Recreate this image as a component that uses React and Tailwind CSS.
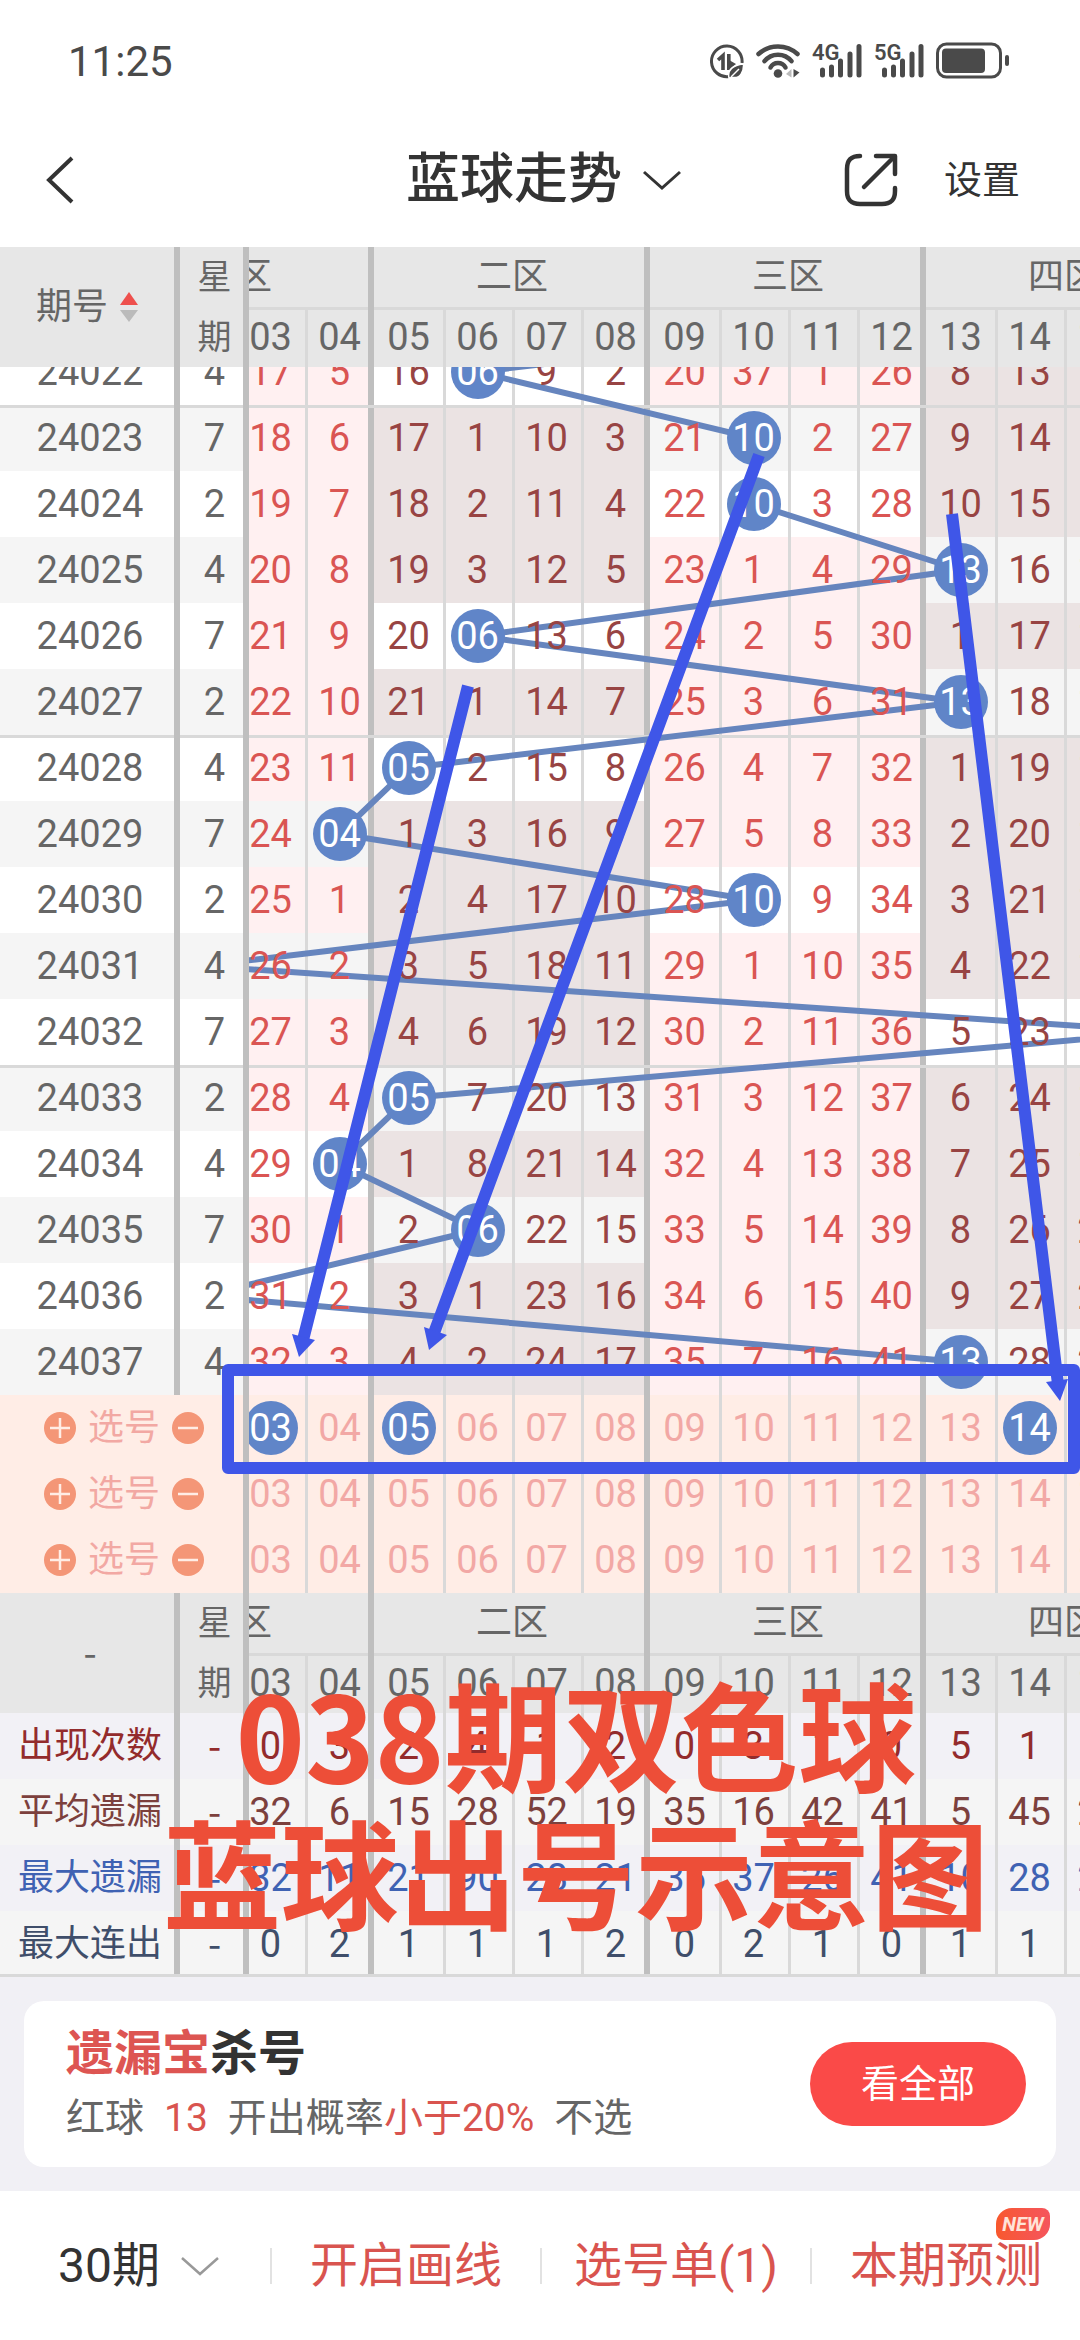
import React, { useState } from 'react'
import { clsx } from 'clsx'

const CELL_W = 69
const ROW_H = 66

const zones = ['一区', '二区', '三区', '四区']
const balls = Array.from({ length: 16 }, (_, i) => i + 1)
const weekdays = [4, 7, 2]

// winning blue ball of every draw, 24022 first
const hits = [6, 10, 10, 13, 6, 13, 5, 4, 10, 2, 16, 5, 4, 6, 2, 13]
// misses of every ball just before the first draw
const startMiss = [8, 3, 16, 4, 15, 2, 8, 1, 19, 36, 0, 25, 7, 12, 6, 5]

const draws = []
let current = startMiss
hits.forEach((hit, i) => {
  current = current.map((m, c) => (c + 1 === hit ? 0 : m + 1))
  draws.push({ issue: 24022 + i, day: weekdays[i % 3], hit, miss: current })
})

const stats = [
  { label: '出现次数', color: 'text-[#932b2c]', bg: 'bg-[#f2f1f6]', values: [1, 3, 0, 3, 2, 4, 1, 2, 0, 3, 1, 0, 5, 1, 1, 2] },
  { label: '平均遗漏', color: 'text-[#7c403d]', bg: 'bg-[#f5f5f5]', values: [28, 9, 32, 6, 15, 28, 52, 19, 35, 16, 42, 41, 5, 45, 20, 12] },
  { label: '最大遗漏', color: 'text-[#3f62b3]', bg: 'bg-[#f2f1f6]', values: [30, 14, 32, 11, 21, 90, 28, 21, 35, 37, 26, 41, 10, 28, 22, 15] },
  { label: '最大连出', color: 'text-[#3f4e6a]', bg: 'bg-[#f5f5f5]', values: [1, 1, 0, 2, 1, 1, 1, 2, 0, 2, 1, 0, 1, 1, 1, 1] },
]

// grid lines by position inside a zone
const lines = {
  body: [
    '',
    'shadow-[inset_3px_0_0_#d9d9d9]',
    'shadow-[inset_3px_0_0_#d9d9d9]',
    'shadow-[inset_3px_0_0_#d9d9d9,inset_-6px_0_0_#bfbfbf]',
  ],
  first: [
    'shadow-[inset_0_3px_0_#d9d9d9]',
    'shadow-[inset_0_3px_0_#d9d9d9,inset_3px_0_0_#d9d9d9]',
    'shadow-[inset_0_3px_0_#d9d9d9,inset_3px_0_0_#d9d9d9]',
    'shadow-[inset_0_3px_0_#d9d9d9,inset_3px_0_0_#d9d9d9,inset_-6px_0_0_#bfbfbf]',
  ],
  head: [
    'shadow-[inset_0_3px_0_#d9d9d9]',
    'shadow-[inset_0_3px_0_#d9d9d9,inset_3px_0_0_#d9d9d9]',
    'shadow-[inset_0_3px_0_#d9d9d9,inset_3px_0_0_#d9d9d9]',
    'shadow-[inset_-6px_0_0_#bfbfbf,inset_0_3px_0_#d9d9d9,inset_3px_0_0_#d9d9d9]',
  ],
  last: [
    'shadow-[inset_0_-3px_0_#d9d9d9]',
    'shadow-[inset_0_-3px_0_#d9d9d9,inset_3px_0_0_#d9d9d9]',
    'shadow-[inset_0_-3px_0_#d9d9d9,inset_3px_0_0_#d9d9d9]',
    'shadow-[inset_0_-3px_0_#d9d9d9,inset_3px_0_0_#d9d9d9,inset_-6px_0_0_#bfbfbf]',
  ],
}

const sideLine = 'shadow-[inset_-6px_0_0_#bfbfbf]'
const sideFirst = 'shadow-[inset_-6px_0_0_#bfbfbf,inset_0_3px_0_#d9d9d9]'
const sideLast = 'shadow-[inset_0_-3px_0_#d9d9d9,inset_-6px_0_0_#bfbfbf]'

const pad = (n) => String(n).padStart(2, '0')
const isFirst = (issue) => issue % 5 === 3

function StatusBar() {
  return (
    <div className="flex h-28 items-center justify-between pt-3 pr-[70px] pl-[68px] text-[#4a4a4a]">
      <span className="text-[42px] leading-none">11:25</span>
      <div className="flex items-center gap-3">
        <svg className="h-9 w-9" viewBox="0 0 36 36" fill="none" stroke="currentColor" strokeWidth="3">
          <path d="M21 32.500 A15.300 15.300 0 1 1 34 19" />
          <path d="M10 16 L15 11.500 V26" strokeWidth="3.600" />
          <path d="M20.800 10 V26" strokeWidth="3.600" />
          <path d="M21 26 V16 L28 20Z" fill="currentColor" stroke="none" />
          <path d="M21 34 C19 26 25 21 35.500 20 C36 28 32 34.500 25 33.500Z" fill="currentColor" stroke="#fff" strokeWidth="1.500" />
          <path d="M23 33 L31 25" stroke="#fff" strokeWidth="1.500" />
        </svg>
        <svg className="h-9 w-11" viewBox="0 0 44 36" fill="none" stroke="currentColor" strokeWidth="4.500" strokeLinecap="round">
          <path d="M2.500 10 A29 29 0 0 1 41.500 10" />
          <path d="M8.500 17.200 A17.300 17.300 0 0 1 35.500 17.200" />
          <path d="M14.500 23.500 A8.500 8.500 0 0 1 29.500 23.500" />
          <circle cx="22" cy="29.500" r="4.300" fill="currentColor" stroke="none" />
          <path d="M35.500 25 V33.500 L30 30Z" fill="#bbb" stroke="none" />
          <path d="M37.500 25 V33.500 L43.500 28.500Z" fill="currentColor" stroke="none" />
        </svg>
        <Signal label="4G" />
        <Signal label="5G" />
        <svg className="h-10 w-[74px]" viewBox="0 0 74 40" fill="none" stroke="currentColor" strokeWidth="3">
          <rect x="1.500" y="2" width="63" height="33" rx="9" />
          <rect x="6" y="6.500" width="43" height="24.500" rx="4" fill="currentColor" stroke="none" />
          <rect x="69" y="13" width="4" height="11" rx="2" fill="currentColor" stroke="none" />
        </svg>
      </div>
    </div>
  )
}

function Signal({ label }) {
  return (
    <div className="relative h-9 w-[50px]">
      <span className="absolute top-0 left-0 text-[22px] leading-[18px] font-semibold">{label}</span>
      <svg className="h-9 w-[50px]" viewBox="0 0 50 36" stroke="currentColor" strokeWidth="5" strokeLinecap="round">
        <path d="M10.500 26 V31 M19.500 23 V31 M28.500 17 V31 M38 10 V31 M47 2.500 V31" />
      </svg>
    </div>
  )
}

function TopBar() {
  return (
    <header className="grid h-[135px] grid-cols-[1fr_auto_1fr] items-center pr-[60px] pl-11 text-[#333]">
      <button aria-label="返回" className="justify-self-start">
        <svg className="h-[50px] w-8" viewBox="0 0 32 50" fill="none" stroke="currentColor" strokeWidth="4">
          <path d="M28 3 L5 25 L28 47" />
        </svg>
      </button>
      <div className="flex items-center gap-5 pl-6">
        <select aria-label="走势" className="appearance-none bg-transparent text-[54px] leading-[72px] font-medium">
          <option>蓝球走势</option>
        </select>
        <svg className="h-5 w-10" viewBox="0 0 40 20" fill="none" stroke="currentColor" strokeWidth="3">
          <path d="M2 2 L20 18 L38 2" />
        </svg>
      </div>
      <div className="flex items-center gap-[46px] justify-self-end">
        <button aria-label="分享">
          <svg className="h-[54px] w-[54px]" viewBox="0 0 54 54" fill="none" stroke="currentColor" strokeWidth="4.500" strokeLinecap="round">
            <path d="M16 3 C7 3 3 7 3 16 V38 C3 47 7 51 16 51 H38 C47 51 51 47 51 38 V35" />
            <path d="M20 34 L50 4" />
            <path d="M32 3 H51 V21" strokeLinejoin="round" />
          </svg>
        </button>
        <button className="text-[38px] leading-none">设置</button>
      </div>
    </header>
  )
}

function SideHead({ children }) {
  return (
    <tr className="h-[120px] bg-[#e7e7e7]">
      <th className={clsx('w-[180px] p-0 font-normal', sideLine)}>{children}</th>
      <th className={clsx('w-[69px] p-0 text-center font-normal', sideLine)}>
        <span className="block text-[34px] leading-[60px]">星<br />期</span>
      </th>
    </tr>
  )
}

function GridHead() {
  return (
    <>
      <tr className="h-[60px] bg-[#e7e7e7] text-[36px]">
        {zones.map(z => (
          <th key={z} colSpan={4} className={clsx('p-0 leading-none font-normal', sideLine)}>{z}</th>
        ))}
      </tr>
      <tr className="h-[60px] bg-[#e7e7e7] text-[38px]">
        {balls.map((b, i) => (
          <th key={b} className={clsx('w-[69px] p-0 leading-none font-normal', lines.head[i % 4])}>{pad(b)}</th>
        ))}
      </tr>
    </>
  )
}

function RoundIcon({ plus }) {
  return (
    <svg className="block h-8 w-8" viewBox="0 0 32 32" stroke="#ffede6" strokeWidth="2.500">
      <circle cx="16" cy="16" r="16" fill="#f49677" stroke="none" />
      <path d={plus ? 'M6 16 H26 M16 6 V26' : 'M6 16 H26'} />
    </svg>
  )
}

function Dash() {
  return <span className="font-['Noto_Sans_CJK_SC',sans-serif] text-[38px] leading-none">-</span>
}

function SideTables({ picks, onAdd, onClear }) {
  return (
    <div className="w-[249px] shrink-0">
      <table className="w-full table-fixed border-separate border-spacing-0">
        <thead>
          <SideHead>
            <button className="flex w-full items-center gap-3 pl-9 text-[36px] leading-none">
              期号
              <svg className="h-8 w-[18px]" viewBox="0 0 18 32">
                <path d="M9 1 L18 14 H0Z" fill="#ee504d" />
                <path d="M9 31 L18 19 H0Z" fill="#bbb" />
              </svg>
            </button>
          </SideHead>
        </thead>
      </table>
      <div className="overflow-hidden">
        <table className="-mt-7 w-full table-fixed border-separate border-spacing-0">
          <tbody>
            {draws.map((d, i) => (
              <tr key={d.issue} className={clsx('h-[66px] text-center text-[38px]', i % 2 ? 'bg-[#f5f5f5]' : 'bg-white')}>
                <td className={clsx('w-[180px] p-0 leading-none', isFirst(d.issue) ? sideFirst : sideLine)}>{d.issue}</td>
                <td className={clsx('w-[69px] p-0 leading-none', isFirst(d.issue) ? sideFirst : sideLine)}>{d.day}</td>
              </tr>
            ))}
            {picks.map((_, i) => (
              <tr key={i} className="h-[66px] bg-[#ffede6]">
                <td colSpan={2} className={clsx('p-0', sideLine)}>
                  <div className="flex items-center gap-3 pl-11 text-[36px] leading-none text-[#f2a8a3]">
                    <button aria-label="添加" onClick={() => onAdd(i)}><RoundIcon plus /></button>
                    <span>选号</span>
                    <button aria-label="清空" onClick={() => onClear(i)}><RoundIcon /></button>
                  </div>
                </td>
              </tr>
            ))}
            <SideHead><Dash /></SideHead>
            {stats.map((s, i) => (
              <tr key={s.label} className={clsx('h-[66px] text-center', s.bg, s.color)}>
                <th className={clsx('p-0 text-[36px] leading-none font-normal', i === 3 ? sideLast : sideLine)}>{s.label}</th>
                <td className={clsx('p-0', i === 3 ? sideLast : sideLine)}><Dash /></td>
              </tr>
            ))}
          </tbody>
        </table>
      </div>
    </div>
  )
}

function DrawCell({ draw, ball, striped }) {
  const i = ball - 1
  const zone = Math.floor(i / 4)
  const hit = draw.hit === ball
  const zoneHit = Math.floor((draw.hit - 1) / 4) === zone
  const odd = zone % 2 === 0
  const rowBg = striped ? 'bg-[#f5f5f5]' : 'bg-white'
  const zoneBg = odd ? 'bg-[#fff0f1]' : 'bg-[#ebe3e3]'
  return (
    <td className={clsx('p-0', zoneHit ? rowBg : zoneBg, (isFirst(draw.issue) ? lines.first : lines.body)[i % 4])}>
      <span
        className={clsx(
          'relative z-10 mx-auto block h-[54px] w-[54px] rounded-full leading-[54px]',
          hit ? 'bg-[#6085c8] text-white' : odd ? 'text-[#da5553]' : 'text-[#984443]'
        )}
      >
        {hit ? pad(ball) : draw.miss[i]}
      </span>
    </td>
  )
}

function TrendLine() {
  // the draw before the first row leaves at the top edge
  const points = [14, ...hits].map((b, i) => `${(b - 0.5) * CELL_W},${(i - 0.5) * ROW_H}`).join(' ')
  return (
    <svg className="pointer-events-none absolute top-0 left-0 h-[1056px] w-[1104px]" viewBox="0 0 1104 1056">
      <polyline points={points} fill="none" stroke="#6685be" strokeWidth="6" />
    </svg>
  )
}

function GridTables({ picks, onToggle }) {
  return (
    <div className="min-w-0 flex-1 overflow-hidden">
      <div className="-ml-[151px] w-[1104px]">
        <table className="w-full table-fixed border-separate border-spacing-0">
          <thead><GridHead /></thead>
        </table>
        <div className="overflow-hidden">
          <div className="relative -mt-7">
            <table className="w-full table-fixed border-separate border-spacing-0 text-center text-[38px]">
              <tbody>
                {draws.map((d, r) => (
                  <tr key={d.issue} className="h-[66px]">
                    {balls.map(b => <DrawCell key={b} draw={d} ball={b} striped={r % 2 === 1} />)}
                  </tr>
                ))}
                {picks.map((row, r) => (
                  <tr key={r} className="h-[66px] bg-[#ffede6]">
                    {balls.map((b, i) => (
                      <td key={b} className={clsx('p-0', lines.body[i % 4])}>
                        <button
                          onClick={() => onToggle(r, b)}
                          className={clsx(
                            'mx-auto block h-[54px] w-[54px] rounded-full leading-[54px]',
                            row.includes(b) ? 'bg-[#6085c8] text-white' : 'text-[#f2a8a5]'
                          )}
                        >
                          {pad(b)}
                        </button>
                      </td>
                    ))}
                  </tr>
                ))}
                <GridHead />
                {stats.map((s, r) => (
                  <tr key={s.label} className={clsx('h-[66px]', s.bg, s.color)}>
                    {s.values.map((v, i) => (
                      <td key={i} className={clsx('p-0 leading-none', (r === 3 ? lines.last : lines.body)[i % 4])}>{v}</td>
                    ))}
                  </tr>
                ))}
              </tbody>
            </table>
            <TrendLine />
          </div>
        </div>
      </div>
    </div>
  )
}

function Annotations() {
  return (
    <div className="pointer-events-none absolute inset-0 z-20">
      <svg className="absolute top-0 left-0 h-[1730px] w-[1080px]" viewBox="0 247 1080 1730" fill="none" stroke="#3f56e8" strokeWidth="12">
        <path d="M468 686 L303 1340 M759 455 L434 1333 M952 514 L1058 1384" />
        <g fill="#3f56e8" stroke="none">
          <path d="M292 1334 L315 1340 L299 1357Z" />
          <path d="M424 1327 L447 1335 L429 1350Z" />
          <path d="M1046 1382 L1068 1379 L1060 1401Z" />
        </g>
        <rect x="228" y="1370" width="846" height="98" strokeLinejoin="round" />
      </svg>
      <p className="absolute bottom-[38px] left-0 w-[1152px] text-center font-['Noto_Sans_CJK_SC',sans-serif] text-[118px] leading-[138px] font-bold text-[#ed4e38]">
        038期双色球<br />蓝球出号示意图
      </p>
    </div>
  )
}

function Chart() {
  const [picks, setPicks] = useState([[3, 5, 14], [], []])

  const update = (r, next) => setPicks(picks.map((p, i) => (i === r ? next : p)))
  const handleToggle = (r, b) => {
    update(r, picks[r].includes(b) ? picks[r].filter(x => x !== b) : [...picks[r], b])
  }
  const handleAdd = (r) => update(r, [...picks[r], 1 + Math.floor(Math.random() * 16)])

  return (
    <section className="relative flex overflow-hidden text-[#666]">
      <SideTables picks={picks} onAdd={handleAdd} onClear={r => update(r, [])} />
      <GridTables picks={picks} onToggle={handleToggle} />
      <Annotations />
    </section>
  )
}

function KillCard() {
  return (
    <section className="bg-[#f1f0f5] p-6">
      <div className="flex h-[166px] items-center justify-between rounded-[20px] bg-white pr-[30px] pl-[42px]">
        <div className="pt-1">
          <h2 className="text-[48px] leading-[64px] font-semibold text-[#333]">
            <span className="text-[#dd5552]">遗漏宝</span>杀号
          </h2>
          <p className="flex text-[39px] leading-[64px] text-[#666]">
            红球<span className="px-5 text-[#d9544f]">13</span>开出概率
            <span className="pr-5 text-[#d9544f]">小于20%</span>不选
          </p>
        </div>
        <button className="h-[84px] w-[216px] rounded-full bg-[#fa4a48] text-[38px] leading-none text-white">看全部</button>
      </div>
    </section>
  )
}

function BottomBar() {
  const item = 'flex h-9 items-center justify-center border-l-2 border-[#e2e2e2] leading-none text-[#d9544f]'
  return (
    <nav className="grid h-[149px] grid-cols-4 items-center bg-white text-[48px]">
      <div className="flex items-center gap-5 pl-[58px] text-[#333]">
        <select aria-label="期数" className="appearance-none bg-transparent leading-[64px]">
          <option>30期</option>
        </select>
        <svg className="h-5 w-10" viewBox="0 0 40 20" fill="none" stroke="#999" strokeWidth="2.500">
          <path d="M2 2 L20 18 L38 2" />
        </svg>
      </div>
      <button className={item}>开启画线</button>
      <button className={item}>选号单(1)</button>
      <button className={clsx(item, 'relative')}>
        本期预测
        <span className="absolute right-[30px] bottom-11 h-8 w-[54px] rounded-tl-2xl rounded-tr-lg rounded-br-2xl rounded-bl-lg bg-linear-to-r from-[#f8582c] to-[#f5555c] text-center text-xl leading-8 font-bold text-[#ffe3d8] italic">
          NEW
        </span>
      </button>
    </nav>
  )
}

export default function App() {
  return (
    <div className="bg-white font-['Roboto','Noto_Sans_CJK_SC',sans-serif]">
      <StatusBar />
      <TopBar />
      <Chart />
      <KillCard />
      <BottomBar />
    </div>
  )
}
